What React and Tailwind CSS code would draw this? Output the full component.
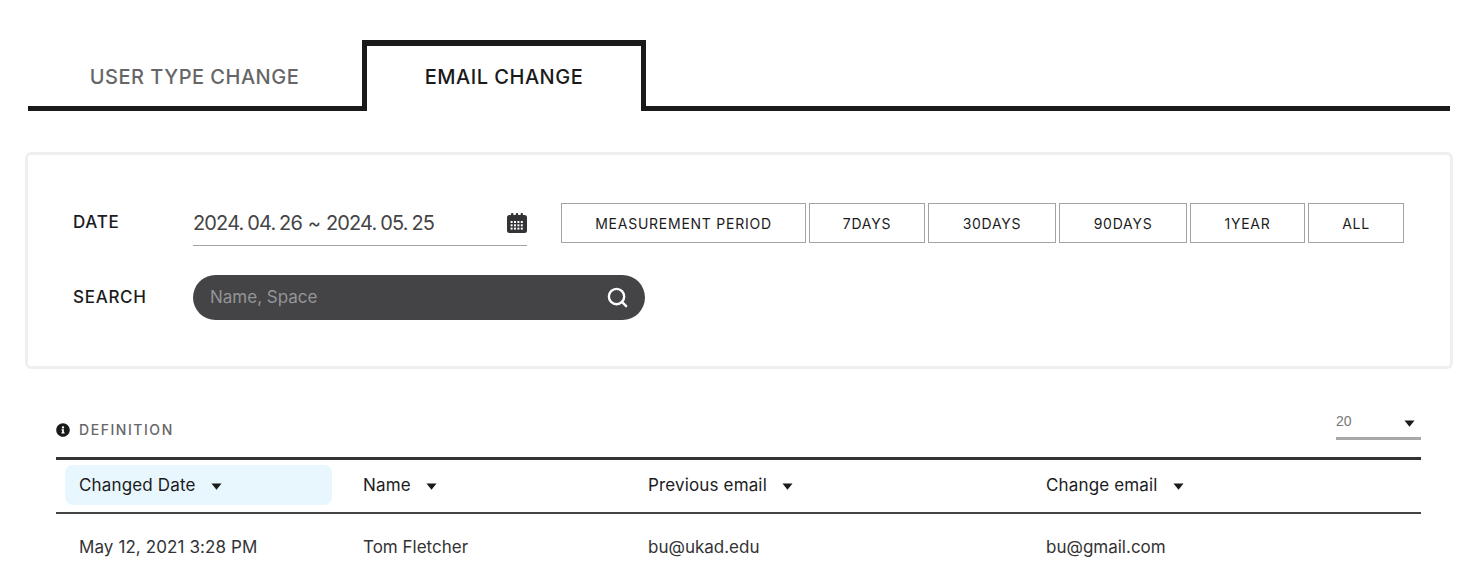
import React from "react";
import { Search } from "lucide-react";
import { FaInfoCircle } from "react-icons/fa";

const periods = [
  { label: "MEASUREMENT PERIOD", width: "w-[245px]" },
  { label: "7DAYS", width: "w-[116px]" },
  { label: "30DAYS", width: "w-[128px]" },
  { label: "90DAYS", width: "w-[128px]" },
  { label: "1YEAR", width: "w-[115px]" },
  { label: "ALL", width: "w-[96px]" },
];

const columns = ["Name", "Previous email", "Change email"];
const row = ["Tom Fletcher", "bu@ukad.edu", "bu@gmail.com"];

function Caret({ className = "" }) {
  return (
    <svg width="11" height="7" viewBox="0 0 11 7" className={className}>
      <path d="M0.5 0.5h10L5.5 6.8z" fill="#1a1a1a" />
    </svg>
  );
}

function CalendarIcon() {
  const dots = [];
  for (let y = 0; y < 3; y++) {
    for (let x = 0; x < 4; x++) {
      dots.push(<rect key={`${x}-${y}`} x={3.6 + x * 3.4} y={8 + y * 3.3} width="2" height="2" fill="#fff" />);
    }
  }
  return (
    <svg width="20" height="20" viewBox="0 0 20 20">
      <rect x="0" y="2" width="20" height="18" rx="2.5" fill="#333335" />
      <rect x="4" y="0" width="2.4" height="4" rx="1" fill="#333335" />
      <rect x="8.8" y="0" width="2.4" height="4" rx="1" fill="#333335" />
      <rect x="13.6" y="0" width="2.4" height="4" rx="1" fill="#333335" />
      {dots}
    </svg>
  );
}

export default function App() {
  return (
    <div className="h-[580px] overflow-hidden bg-white font-['Inter',sans-serif] text-[#1c1c1e]">
      {/* Tabs */}
      <div className="ml-[28px] flex w-[1422px] items-end pt-[40px]">
        <div className="flex h-[71px] w-[334px] items-center justify-center border-b-[5px] border-[#1a1a1a] pt-[8px] pr-[1px] text-[20px] font-medium tracking-[0.5px] text-[#666668]">
          USER TYPE CHANGE
        </div>
        <div className="flex h-[71px] w-[284px] items-center justify-center border-x-[5px] border-t-[6px] border-[#1a1a1a] pb-[3px] text-[20px] font-medium tracking-[0.5px] text-[#1a1a1a]">
          EMAIL CHANGE
        </div>
        <div className="h-[5px] flex-1 bg-[#1a1a1a]" />
      </div>

      {/* Filter panel */}
      <div className="mt-[41px] ml-[25px] flex h-[217px] w-[1428px] flex-col rounded-md border-[3px] border-[#efefef] pt-[48px] pl-[45px]">
        <div className="flex items-start">
          <span className="flex h-[39px] w-[120px] items-center text-[17px] font-medium tracking-[0.7px]">DATE</span>
          <div className="flex h-[43px] w-[334px] items-center justify-between border-b border-[#a3a3a5] pb-[3px]">
            <span className="text-[20px] tracking-[-0.85px] text-[#444446] [word-spacing:-1px]">
              2024. 04. 26<span className="mx-[2px]"> ~ </span>2024. 05. 25
            </span>
            <CalendarIcon />
          </div>
          <div className="ml-[34px] flex gap-[3px]">
            {periods.map((p) => (
              <button
                key={p.label}
                className={`h-[40px] ${p.width} border border-[#a3a3a5] text-[14px] tracking-[0.75px] text-[#1c1c1e]`}
              >
                {p.label}
              </button>
            ))}
          </div>
        </div>
        <div className="mt-[29px] flex items-center">
          <span className="w-[120px] text-[17px] font-medium tracking-[0.7px]">SEARCH</span>
          <div className="flex h-[45px] w-[452px] items-center justify-between rounded-full bg-[#444446] pr-[16px] pl-[17px]">
            <span className="text-[17px] text-[#949496]">Name, Space</span>
            <Search size={23} color="#fff" strokeWidth={2.5} />
          </div>
        </div>
      </div>

      {/* Table */}
      <div className="mx-[56px] mt-[45px] w-[1365px]">
        <div className="flex h-[44px] items-start justify-between">
          <div className="mt-[5px] flex items-center gap-[9px]">
            <FaInfoCircle size={14} color="#1a1a1a" />
            <span className="text-[14px] font-medium tracking-[1.55px] text-[#666668]">DEFINITION</span>
          </div>
          <div className="flex h-[26px] w-[85px] items-start justify-between border-b-[3px] border-[#a8a8aa]">
            <span className="font-['Liberation_Sans',sans-serif] text-[14px] leading-[14px] text-[#777779]">20</span>
            <Caret className="mt-[6px] mr-[6px]" />
          </div>
        </div>
        <div className="-mt-[1px] grid h-[57px] grid-cols-[292px_285px_398px_1fr] items-center border-t-[3px] border-b-2 border-t-[#333335] border-b-[#444446] pb-[2px] text-[17px] tracking-[0.15px]">
          <div className="mr-[16px] ml-[9px] flex h-[40px] items-center gap-[15px] rounded-lg bg-[#e8f7fd] pt-[2px] pl-[14px]">
            Changed Date <Caret />
          </div>
          {columns.map((c) => (
            <div key={c} className="flex items-center gap-[15px] pt-[2px] pl-[15px]">
              {c} <Caret />
            </div>
          ))}
        </div>
        <div className="grid h-[66px] grid-cols-[292px_285px_398px_1fr] items-center pt-[1px] text-[17px] text-[#333335]">
          <div className="pl-[23px] tracking-[0.1px]">May 12, 2021 3:28 PM</div>
          {row.map((c) => (
            <div key={c} className="pl-[15px]">{c}</div>
          ))}
        </div>
      </div>
    </div>
  );
}
